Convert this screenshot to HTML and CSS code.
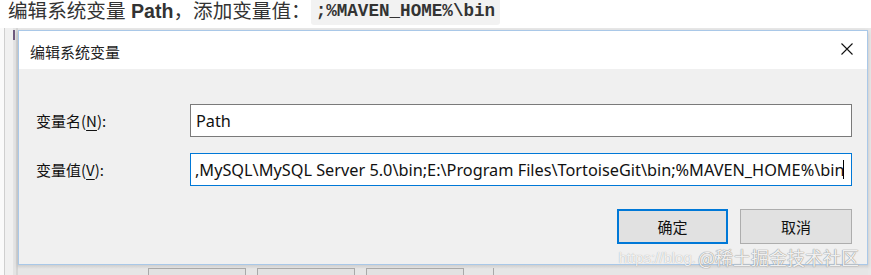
FILE: index.html
```html
<!DOCTYPE html>
<html lang="zh-CN">
<head>
  <meta charset="UTF-8" />
  <title>编辑系统变量 Path</title>
  <link rel="stylesheet" href="styles.css">
</head>
<body>
  <!-- Article line above the screenshot -->
  <p class="lead">编辑系统变量 <strong>Path</strong>，添加变量值：<code>;%MAVEN_HOME%\bin</code></p>

  <!-- Screenshot of the Windows dialog -->
  <div class="shot">
    <div class="desk-edge"><div class="edge-mark"></div></div>
    <div class="stage">
      <div class="dialog">
        <div class="titlebar">
          <span class="title">编辑系统变量</span>
          <svg class="close" width="14" height="14" viewBox="0 0 14 14">
            <path d="M1.5 1.5 L12.5 12.5 M12.5 1.5 L1.5 12.5" stroke="#111" stroke-width="1.1" fill="none"/>
          </svg>
        </div>
        <div class="dlg-body">
          <div class="field">
            <label class="field-label">变量名(<u>N</u>):</label>
            <div class="input">Path</div>
          </div>
          <div class="field">
            <label class="field-label">变量值(<u>V</u>):</label>
            <div class="input focused">
              <span class="input-text">,MySQL\MySQL Server 5.0\bin;E:\Program Files\TortoiseGit\bin;%MAVEN_HOME%\bin</span><i class="caret"></i>
            </div>
          </div>
          <div class="actions">
            <button class="btn primary">确定</button>
            <button class="btn">取消</button>
          </div>
        </div>
      </div>
      <!-- Window behind the dialog -->
      <div class="behind">
        <span class="ghost-btn"></span>
        <span class="ghost-btn"></span>
        <span class="ghost-btn"></span>
        <span class="ghost-line"></span>
      </div>
    </div>
    <div class="watermark"><span class="wm-url">https://blog.</span><span class="wm-brand">@稀土掘金技术社区</span></div>
  </div>
</body>
</html>
```

FILE: styles.css
```css
html, body {
  margin: 0;
  padding: 0;
  background: #fff;
  overflow: hidden;
}
/* Article text line */
.lead {
  margin: 0;
  padding-left: 8px;
  height: 28px;
  font-family: "Liberation Sans", "Noto Sans CJK SC", sans-serif;
  font-size: 19.6px;
  line-height: 22px;
  color: #333;
  white-space: nowrap;
}
.lead strong {
  font-weight: bold;
}
.lead code {
  display: inline-block;
  vertical-align: top;
  margin-top: -2px;
  padding: 2px 5px 3px;
  font-family: "Liberation Mono", monospace;
  font-weight: bold;
  font-size: 17.6px;
  line-height: 22px;
  color: #333;
  background: #f2f2f2;
  border-radius: 3px;
}
/* Screenshot area */
.shot {
  position: relative;
  display: flex;
  height: 247px;
  background: #e8e8e8;
}
.desk-edge {
  width: 18px;
  flex: none;
  background: linear-gradient(to right, #fafafa 0 4px, #cfcfcf 4px 5px, #f0f0f0 5px 13px, #e4e4e4 13px 16px, #d6d6d6 16px 18px);
}
.edge-mark {
  margin: 2px 0 0 13px;
  width: 2px;
  height: 10px;
  background: #6e5a7e;
}
.stage {
  display: flex;
  flex-direction: column;
  width: 850px;
}
.dialog {
  margin-top: 2px;
  height: 233px;
  border: 1px solid #a9c8e8;
  background: #f0f0f0;
  box-shadow: 0 2px 4px rgba(0, 0, 0, 0.18);
  display: flex;
  flex-direction: column;
  font-family: "Noto Sans", "Noto Sans CJK SC", sans-serif;
  color: #000;
}
.titlebar {
  height: 38px;
  background: #fff;
  display: flex;
  align-items: center;
  justify-content: space-between;
  padding: 0 13px 0 11px;
}
.title {
  font-family: "Noto Sans CJK SC", sans-serif;
  font-size: 15px;
  color: #222;
  margin-top: 2px;
}
.close {
  display: block;
  margin-top: -2px;
}
.dlg-body {
  padding: 35px 15px 0 17px;
  display: flex;
  flex-direction: column;
  gap: 16px;
}
.field {
  display: flex;
  align-items: center;
}
.field-label {
  width: 154px;
  flex: none;
  font-family: "Noto Sans CJK SC", sans-serif;
  font-size: 15px;
  color: #111;
}
.field-label u {
  text-underline-offset: 3px;
}
.input {
  flex: 1;
  height: 31px;
  border: 1px solid #7a7a7a;
  background: #fff;
  padding: 0 5px;
  display: flex;
  align-items: center;
  font-size: 16.3px;
  color: #111;
  overflow: hidden;
  white-space: nowrap;
}
.input.focused {
  border-color: #0078d7;
  padding: 0 3px 0 4px;
}
.caret {
  width: 1px;
  height: 19px;
  background: #000;
  margin-left: -2px;
  flex: none;
}
.actions {
  display: flex;
  justify-content: flex-end;
  gap: 12px;
  margin-top: 7px;
}
.btn {
  width: 112px;
  height: 35px;
  border: 1px solid #adadad;
  background: #e1e1e1;
  font-family: "Noto Sans CJK SC", sans-serif;
  font-size: 15px;
  color: #111;
  padding: 0;
}
.btn.primary {
  width: 111px;
  border: 2px solid #0078d7;
}
/* Window behind the dialog */
.behind {
  flex: 1;
  display: flex;
  gap: 11px;
  padding: 3px 0 0 130px;
  background: linear-gradient(to bottom, #cfcfcf, #e6e6e6 4px);
}
.ghost-btn {
  width: 96px;
  border: 1px solid #a9a9a9;
  border-bottom: none;
  background: #e2e2e2;
}
.ghost-line {
  width: 1px;
  margin-left: 18px;
  background: #a9a9a9;
}
/* Blog watermark */
.watermark {
  position: absolute;
  right: 12px;
  top: 216px;
  display: flex;
  align-items: center;
  white-space: nowrap;
}
.wm-url {
  font-family: "Liberation Sans", sans-serif;
  font-size: 15px;
  color: rgba(255, 255, 255, 0.85);
  text-shadow: 0 0 1px rgba(0, 0, 0, 0.35);
  margin-right: 2px;
}
.wm-brand {
  font-family: "Noto Sans CJK SC", sans-serif;
  font-size: 18px;
  color: rgba(255, 255, 255, 0.9);
  text-shadow: 0 0 1px #888, 0 0 1px #888;
}
```
